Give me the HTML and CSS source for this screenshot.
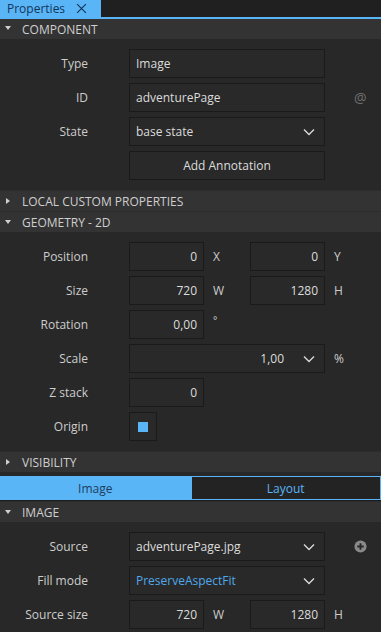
FILE: index.html
```html
<!DOCTYPE html>
<html lang="en">

<head>
    <meta charset="UTF-8">
    <meta name="viewport" content="width=device-width, initial-scale=1.0">
    <title>Properties</title>
    <link rel="stylesheet" href="styles.css">
</head>

<body>
    <div class="tabbar">
        <div class="tab">
            Properties
            <svg class="close" viewBox="0 0 10 10"><path d="M1 1L9 9M9 1L1 9" /></svg>
        </div>
    </div>

    <div class="header open first">COMPONENT</div>
    <div class="section">
        <div class="row">
            <span class="label">Type</span>
            <div class="field wide">Image</div>
        </div>
        <div class="row">
            <span class="label">ID</span>
            <div class="field wide">adventurePage</div>
            <span class="extra at">@</span>
        </div>
        <div class="row">
            <span class="label">State</span>
            <div class="field wide combo">base state
                <svg class="chev" viewBox="0 0 12 8"><path d="M1 1.5L6 6.5L11 1.5" /></svg>
            </div>
        </div>
        <div class="row">
            <span class="label"></span>
            <div class="field wide button">Add Annotation</div>
        </div>
    </div>

    <div class="header">LOCAL CUSTOM PROPERTIES</div>
    <div class="header open">GEOMETRY - 2D</div>
    <div class="section">
        <div class="row">
            <span class="label">Position</span>
            <div class="field small num">0</div>
            <span class="unit">X</span>
            <div class="field small num">0</div>
            <span class="unit">Y</span>
        </div>
        <div class="row">
            <span class="label">Size</span>
            <div class="field small num">720</div>
            <span class="unit">W</span>
            <div class="field small num">1280</div>
            <span class="unit">H</span>
        </div>
        <div class="row">
            <span class="label">Rotation</span>
            <div class="field small num">0,00</div>
            <span class="unit deg">°</span>
        </div>
        <div class="row">
            <span class="label">Scale</span>
            <div class="field wide num combo">1,00
                <svg class="chev" viewBox="0 0 12 8"><path d="M1 1.5L6 6.5L11 1.5" /></svg>
            </div>
            <span class="unit">%</span>
        </div>
        <div class="row">
            <span class="label">Z stack</span>
            <div class="field small num">0</div>
        </div>
        <div class="row">
            <span class="label">Origin</span>
            <div class="field origin"><span class="dot"></span></div>
        </div>
    </div>

    <div class="header">VISIBILITY</div>
    <div class="switch">
        <div class="switch-item active">Image</div>
        <div class="switch-item">Layout</div>
    </div>
    <div class="header open">IMAGE</div>
    <div class="section">
        <div class="row">
            <span class="label">Source</span>
            <div class="field wide combo">adventurePage.jpg
                <svg class="chev" viewBox="0 0 12 8"><path d="M1 1.5L6 6.5L11 1.5" /></svg>
            </div>
            <svg class="extra plus" viewBox="0 0 14 14">
                <circle cx="7" cy="7" r="6.5" />
                <path d="M7 3.5V10.5M3.5 7H10.5" />
            </svg>
        </div>
        <div class="row">
            <span class="label">Fill mode</span>
            <div class="field wide combo link">PreserveAspectFit
                <svg class="chev" viewBox="0 0 12 8"><path d="M1 1.5L6 6.5L11 1.5" /></svg>
            </div>
        </div>
        <div class="row">
            <span class="label">Source size</span>
            <div class="field small num">720</div>
            <span class="unit">W</span>
            <div class="field small num">1280</div>
            <span class="unit">H</span>
        </div>
    </div>
</body>

</html>
```

FILE: styles.css
```css
body {
    margin: 0;
    background-color: #282828;
    color: #d4d4d4;
    font-family: "Open Sans", "Noto Sans", sans-serif;
    font-size: 12px;
    overflow: hidden;
}

.tabbar {
    height: 17px;
    background-color: #202020;
    border-bottom: 2px solid #5ab5f7;
    display: flex;
}

.tab {
    width: 101px;
    box-sizing: border-box;
    background-color: #5ab5f7;
    color: #12365a;
    padding-left: 7px;
    line-height: 17px;
    display: flex;
    align-items: center;
}

.close {
    width: 11px;
    height: 11px;
    margin-left: 11px;
    fill: none;
    stroke: #12365a;
    stroke-width: 1.1;
}

.header {
    height: 21px;
    box-sizing: border-box;
    background-color: #333333;
    border-top: 1px solid #2c2c2c;
    color: #cfcfcf;
    display: flex;
    align-items: center;
    padding-left: 22px;
    position: relative;
}

.header.first {
    height: 20px;
    border-top: none;
}

.header::before {
    content: "";
    position: absolute;
    left: 6px;
    top: 7px;
    border-left: 4px solid #cfcfcf;
    border-top: 3.5px solid transparent;
    border-bottom: 3.5px solid transparent;
}

.header.open::before {
    left: 5px;
    top: 8px;
    border-top: 4px solid #cfcfcf;
    border-left: 3.5px solid transparent;
    border-right: 3.5px solid transparent;
    border-bottom: none;
}

.header.first::before {
    top: 7px;
}

.section {
    padding: 10px 0;
    display: flex;
    flex-direction: column;
    gap: 5px;
}

.row {
    display: flex;
    align-items: center;
    height: 29px;
}

.label {
    width: 88px;
    margin-right: 41px;
    text-align: right;
    color: #cdcdcd;
}

.field {
    height: 29px;
    box-sizing: border-box;
    border: 1px solid #1a1a1a;
    background-color: #292929;
    display: flex;
    align-items: center;
    padding: 0 6px;
    color: #dcdcdc;
}

.wide {
    width: 196px;
}

.small {
    width: 75px;
}

.num {
    justify-content: flex-end;
}

.combo {
    position: relative;
    padding-right: 30px;
}

.num.combo {
    padding-right: 40px;
}

.combo:not(.num) {
    justify-content: flex-start;
}

.chev {
    position: absolute;
    right: 9px;
    top: 10px;
    width: 12px;
    height: 8px;
    fill: none;
    stroke: #d8d8d8;
    stroke-width: 1.4;
}

.button {
    justify-content: center;
}

.link {
    color: #4fa8ea;
}

.unit {
    width: 46px;
    box-sizing: border-box;
    padding-left: 9px;
    color: #cdcdcd;
}

.deg {
    align-self: flex-start;
    margin-top: 3px;
    font-size: 10px;
}

.extra {
    margin-left: 29px;
}

.at {
    color: #707070;
    font-size: 14px;
}

.plus {
    width: 13px;
    height: 13px;
    margin-left: 29px;
}

.plus circle {
    fill: #8a8a8a;
}

.plus path {
    stroke: #282828;
    stroke-width: 2;
}

.origin {
    width: 28px;
    justify-content: center;
}

.dot {
    width: 10px;
    height: 10px;
    background-color: #5ab5f7;
}

.switch {
    display: flex;
    height: 24px;
    margin-top: 4px;
    border-bottom: 1px solid #1c1c1c;
}

.switch-item {
    flex: 1;
    display: flex;
    align-items: center;
    justify-content: center;
    box-sizing: border-box;
    border: 1px solid #5ab5f7;
    background-color: #232323;
    color: #5ab5f7;
}

.switch-item.active {
    background-color: #5ab5f7;
    color: #1d3c5c;
}
```
